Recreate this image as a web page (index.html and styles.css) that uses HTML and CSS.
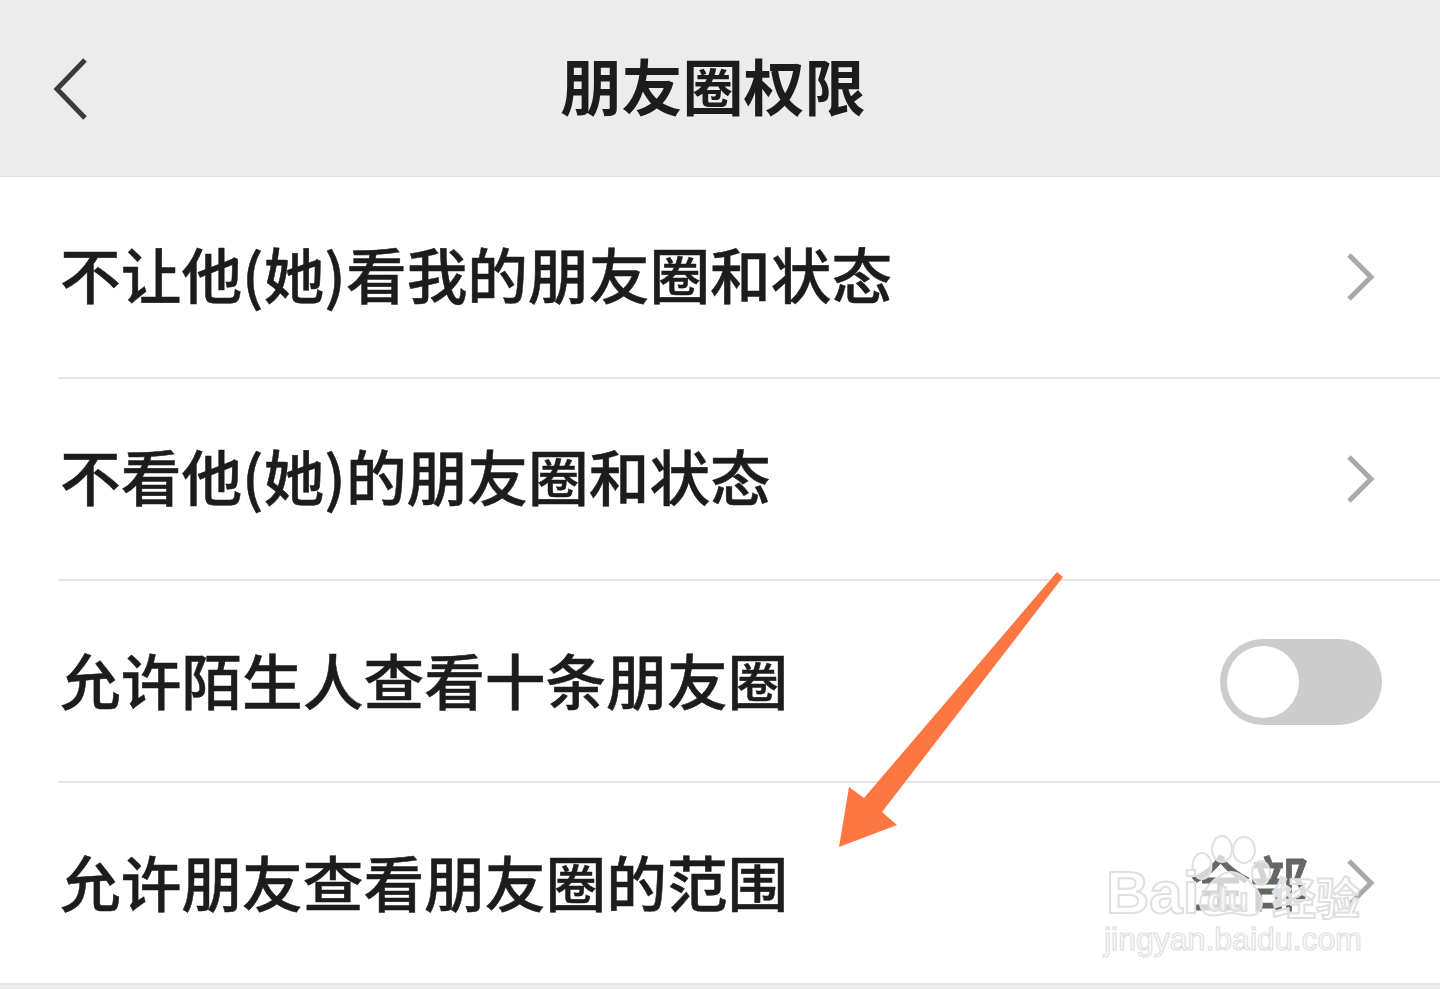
FILE: index.html
```html
<!DOCTYPE html>
<html lang="zh-CN">
<head>
  <meta charset="UTF-8">
  <meta name="viewport" content="width=device-width, initial-scale=1.0">
  <title>朋友圈权限</title>
  <link rel="stylesheet" href="styles.css">
</head>
<body>

<header class="topbar">
  <svg class="back-icon" width="40" height="70" viewBox="0 0 40 70">
    <path d="M33 6 L5 35 L33 64"/>
  </svg>
  <h1>朋友圈权限</h1>
</header>

<main class="list">
  <div class="row">
    <span class="row-label">不让他(她)看我的朋友圈和状态</span>
    <svg class="chevron" width="30" height="50" viewBox="0 0 30 50"><path d="M4 3 L26 25 L4 47"/></svg>
  </div>
  <div class="row">
    <span class="row-label">不看他(她)的朋友圈和状态</span>
    <svg class="chevron" width="30" height="50" viewBox="0 0 30 50"><path d="M4 3 L26 25 L4 47"/></svg>
  </div>
  <div class="row">
    <span class="row-label low">允许陌生人查看十条朋友圈</span>
    <div class="toggle"><div class="knob"></div></div>
  </div>
  <div class="row">
    <span class="row-label low">允许朋友查看朋友圈的范围</span>
    <span class="row-value">全部</span>
    <svg class="chevron" width="30" height="50" viewBox="0 0 30 50"><path d="M4 3 L26 25 L4 47"/></svg>
  </div>
</main>

<!-- annotation and watermark sit on top of the list -->
<svg class="arrow" width="240" height="290" viewBox="0 0 240 290">
  <path d="M217 2 L223 7 L42 242 L57 255 L-1 277 L9 217 L24 228 Z"/>
</svg>

<div class="watermark">
  <svg class="paw" width="90" height="90" viewBox="0 0 90 90">
    <ellipse cx="13" cy="31" rx="9.5" ry="13"/>
    <ellipse cx="33" cy="14" rx="10" ry="13"/>
    <ellipse cx="55" cy="15" rx="11" ry="13"/>
    <ellipse cx="72" cy="38" rx="9" ry="12"/>
    <path d="M42 37 C56 37 77 60 72 73 C67 86 52 78 42 78 C32 78 18 86 12 73 C7 60 28 37 42 37 Z"/>
  </svg>
  <div class="wm-top">
    <span class="wm-bai">Bai</span>
    <span class="wm-du">du</span>
    <span class="wm-cn">经验</span>
  </div>
  <div class="wm-url">jingyan.baidu.com</div>
</div>

</body>
</html>
```

FILE: styles.css
```css
:root {
  --bar-bg: #ececec;
  --line: #e4e4e4;
  --text: #1c1c1c;
  --chevron: #a9a9a9;
  --cjk: "Noto Sans CJK SC", "Liberation Sans", sans-serif;
}
body {
  margin: 0;
  height: 989px;
  overflow: hidden;
  position: relative;
  background-color: var(--bar-bg);
  color: var(--text);
  font-family: var(--cjk);
}
.topbar {
  height: 176px;
  display: flex;
  align-items: center;
  justify-content: center;
  position: relative;
  border-bottom: 1px solid #e2e2e2;
}
.topbar h1 {
  margin: 0 0 8px -14px;
  font-size: 61px;
  font-weight: 700;
  line-height: 1;
}
.back-icon {
  position: absolute;
  left: 52px;
  top: 54px;
}
.back-icon path {
  fill: none;
  stroke: #3a3a3a;
  stroke-width: 5;
}
.list {
  background-color: #fff;
}
.row {
  height: 200px;
  margin-left: 58px;
  padding: 0 58px 0 2px;
  display: flex;
  align-items: center;
  border-bottom: 2px solid var(--line);
}
.row:last-child {
  margin-left: 0;
  padding-left: 60px;
}
.row-label {
  flex: 1;
  margin-bottom: 7px;
  font-size: 60.7px;
  font-weight: 500;
  line-height: 1;
  -webkit-text-stroke: 0.5px var(--text);
}
.row-label.low {
  margin-bottom: 4px;
}
.row-value {
  margin-right: 36px;
  margin-bottom: 6px;
  font-size: 59px;
  font-weight: 500;
  line-height: 1;
  color: #666;
  -webkit-text-stroke: 0.8px #666;
}
.chevron {
  margin-right: 7px;
  flex: none;
}
.chevron path {
  fill: none;
  stroke: var(--chevron);
  stroke-width: 5;
}
.toggle {
  width: 162px;
  height: 86px;
  margin-top: 2px;
  border-radius: 43px;
  background-color: #ccc;
  padding: 7px;
  box-sizing: border-box;
}
.knob {
  width: 72px;
  height: 72px;
  border-radius: 50%;
  background-color: #fff;
}
.arrow {
  position: absolute;
  left: 840px;
  top: 570px;
  overflow: visible;
}
.arrow path {
  fill: #fe7743;
}
.watermark {
  position: absolute;
  left: 1104px;
  top: 835px;
  width: 262px;
  height: 125px;
}
.paw {
  position: absolute;
  left: 85px;
  top: 0;
}
.paw ellipse, .paw path {
  fill: rgba(255, 255, 255, 0.72);
  stroke: #e0e0e0;
  stroke-width: 2;
}
.wm-top {
  position: absolute;
  left: 0;
  top: 24px;
  width: 262px;
  height: 70px;
}
.wm-top span {
  position: absolute;
  color: rgba(255, 255, 255, 0.8);
  -webkit-text-stroke: 2px #e0e0e0;
  line-height: 1;
}
.wm-bai {
  left: 2px;
  top: 4px;
  font-family: "Liberation Sans", sans-serif;
  font-size: 60px;
  font-weight: 700;
}
.wm-du {
  left: 103px;
  top: 23px;
  font-family: "Liberation Sans", sans-serif;
  font-size: 34px;
  font-weight: 700;
}
.wm-cn {
  left: 168px;
  top: 15px;
  font-size: 44px;
  font-weight: 700;
}
.wm-url {
  position: absolute;
  left: 0;
  top: 85px;
  font-family: "Liberation Sans", sans-serif;
  font-size: 32px;
  line-height: 1.2;
  color: #fff;
  -webkit-text-stroke: 1.2px #e0e0e0;
}
```
